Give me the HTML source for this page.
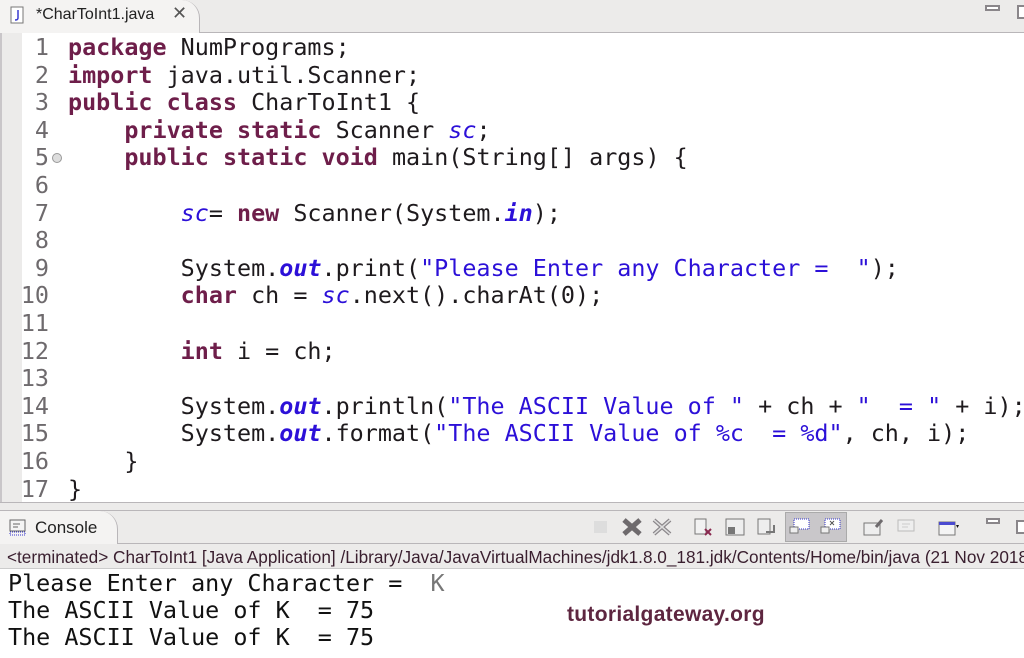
<!DOCTYPE html>
<html><head><meta charset="utf-8"><style>
*{margin:0;padding:0;box-sizing:border-box}
html,body{width:1024px;height:658px;overflow:hidden}
body{background:#fff;position:relative;font-family:"Liberation Sans",sans-serif}
.tabbar{position:absolute;left:0;top:0;width:1024px;height:33px;background:#ecebea;border-bottom:1px solid #b9b6b9}
.tab{position:absolute;left:0;top:0;width:200px;height:33px;background:#f4f3f2;border-right:1px solid #b9b6b9;border-top-right-radius:18px}
.tabtxt{position:absolute;left:36px;top:6px;font-size:16px;color:#222}
.leftstrip{position:absolute;left:0;top:33px;width:22px;height:470px;background:#ecebea;border-left:2px solid #c9c6c9}
.code{position:absolute;left:0;top:34px;font-family:"DejaVu Sans Mono","Liberation Mono",monospace;font-size:23.4px;line-height:27.6px;color:#1e1a1d;white-space:pre}
.ln{position:absolute;left:10px;width:39px;text-align:right;color:#6e6a6d}
.tx{position:absolute;left:68px}
.k{color:#6e1e4a;font-weight:bold}
.f{color:#2c10d8;font-weight:bold;font-style:italic}
.s{color:#2c10d8}
.band{position:absolute;left:0;top:502px;width:1024px;height:10px;background:#ecebea;border-top:1px solid #b9b6b9}
.ctab{position:absolute;left:0;top:510px;width:1024px;height:34px;background:#ecebea;border-top:1px solid #b9b6b9;border-bottom:1px solid #b9b6b9}
.ctab .t{position:absolute;left:0;top:0;width:118px;height:33px;background:#f4f3f2;border-top-right-radius:18px;border-right:1px solid #b9b6b9}
.status{position:absolute;left:0;top:544px;width:1024px;height:25px;background:#ecebea;border-bottom:1px solid #ccc;font-size:17.2px;color:#3a1f2f;padding:3px 0 0 7px;white-space:nowrap;overflow:hidden}
.out{position:absolute;left:8px;top:570px;font-family:"DejaVu Sans Mono","Liberation Mono",monospace;font-size:23.4px;line-height:27px;color:#111;white-space:pre}
.logo{position:absolute;left:567px;top:603px;font-size:21px;font-weight:bold;color:#5e2640;letter-spacing:.3px}
.ic{position:absolute;top:6px;width:22px;height:20px}
</style></head><body>
<div class="tabbar"><div class="tab">
<svg style="position:absolute;left:10px;top:6px" width="14" height="18"><rect x="1" y="1" width="12" height="16" fill="#fff" stroke="#777"/><path d="M8 4v8q0 2-3 2" stroke="#3a3ad0" fill="none" stroke-width="1.5"/></svg>
<div class="tabtxt">*CharToInt1.java</div>
<div style="position:absolute;left:172px;top:3px;font-size:18px;color:#555">✕</div>
</div>
<div style="position:absolute;left:985px;top:5px;width:15px;height:6px;border:2px solid #8a868a;background:#fff"></div>
<div style="position:absolute;left:1017px;top:5px;width:12px;height:14px;border:2px solid #8a868a;background:#fff"></div>
</div>
<div class="leftstrip"></div>
<div class="code">
<div class="ln" style="top:0">1</div><div class="tx" style="top:0"><span class="k">package</span> NumPrograms;</div>
<div class="ln" style="top:27.6px">2</div><div class="tx" style="top:27.6px"><span class="k">import</span> java.util.Scanner;</div>
<div class="ln" style="top:55.2px">3</div><div class="tx" style="top:55.2px"><span class="k">public</span> <span class="k">class</span> CharToInt1 {</div>
<div class="ln" style="top:82.8px">4</div><div class="tx" style="top:82.8px">    <span class="k">private</span> <span class="k">static</span> Scanner <span class="f" style="font-weight:normal">sc</span>;</div>
<div class="ln" style="top:110.4px">5</div><div style="position:absolute;left:52px;top:119px;width:10px;height:10px;border-radius:50%;border:1px solid #999;background:#ddd"></div><div class="tx" style="top:110.4px">    <span class="k">public</span> <span class="k">static</span> <span class="k">void</span> main(String[] args) {</div>
<div class="ln" style="top:138px">6</div>
<div class="ln" style="top:165.6px">7</div><div class="tx" style="top:165.6px">        <span class="f" style="font-weight:normal">sc</span>= <span class="k">new</span> Scanner(System.<span class="f">in</span>);</div>
<div class="ln" style="top:193.2px">8</div>
<div class="ln" style="top:220.8px">9</div><div class="tx" style="top:220.8px">        System.<span class="f">out</span>.print(<span class="s">"Please Enter any Character =  "</span>);</div>
<div class="ln" style="top:248.4px">10</div><div class="tx" style="top:248.4px">        <span class="k">char</span> ch = <span class="f" style="font-weight:normal">sc</span>.next().charAt(0);</div>
<div class="ln" style="top:276px">11</div>
<div class="ln" style="top:303.6px">12</div><div class="tx" style="top:303.6px">        <span class="k">int</span> i = ch;</div>
<div class="ln" style="top:331.2px">13</div>
<div class="ln" style="top:358.8px">14</div><div class="tx" style="top:358.8px">        System.<span class="f">out</span>.println(<span class="s">"The ASCII Value of "</span> + ch + <span class="s">"  = "</span> + i);</div>
<div class="ln" style="top:386.4px">15</div><div class="tx" style="top:386.4px">        System.<span class="f">out</span>.format(<span class="s">"The ASCII Value of %c  = %d"</span>, ch, i);</div>
<div class="ln" style="top:414px">16</div><div class="tx" style="top:414px">    }</div>
<div class="ln" style="top:441.6px">17</div><div class="tx" style="top:441.6px">}</div>
</div>
<div class="band"></div>
<div class="ctab"><div class="t">
<svg style="position:absolute;left:9px;top:8px" width="18" height="18"><rect x="1" y="1" width="15" height="11" fill="#f4f4f4" stroke="#666"/><path d="M4 5h7M4 8h5" stroke="#666"/><rect x="1" y="13" width="15" height="3" fill="none" stroke="#33c" stroke-dasharray="1 1"/></svg>
<div style="position:absolute;left:35px;top:7px;font-size:17px;color:#222">Console</div></div>
<div style="position:absolute;left:785px;top:1px;width:62px;height:30px;background:#c9c7ca;border:1px solid #aaa"></div>
<svg class="ic" style="left:590px" viewBox="0 0 22 20"><rect x="4" y="4" width="13" height="12" fill="#ddd"/></svg>
<svg class="ic" style="left:621px" viewBox="0 0 22 20"><path d="M3 3l16 14M19 3L3 17" stroke="#6e6a6d" stroke-width="5"/></svg>
<svg class="ic" style="left:651px" viewBox="0 0 22 20"><path d="M3 3l16 14M19 3L3 17" stroke="#8a868a" stroke-width="4"/><path d="M3 3l16 14M19 3L3 17" stroke="#ddd" stroke-width="1.5"/></svg>
<svg class="ic" style="left:693px" viewBox="0 0 22 20"><rect x="2" y="2" width="11" height="15" fill="#f2f2f2" stroke="#777"/><path d="M12 12l6 6M18 12l-6 6" stroke="#8a2a50" stroke-width="2"/></svg>
<svg class="ic" style="left:724px" viewBox="0 0 22 20"><rect x="2" y="2" width="18" height="16" fill="#eee" stroke="#777"/><rect x="4" y="10" width="7" height="7" fill="#777"/></svg>
<svg class="ic" style="left:756px" viewBox="0 0 22 20"><rect x="2" y="2" width="12" height="15" fill="#eee" stroke="#777"/><path d="M18 8v7h-8" stroke="#777" stroke-width="2" fill="none"/></svg>
<svg class="ic" style="left:789px" viewBox="0 0 22 20"><rect x="5" y="2" width="15" height="10" fill="#fff" stroke="#33c" stroke-dasharray="1 1"/><rect x="1" y="10" width="8" height="6" fill="#eee" stroke="#777"/></svg>
<svg class="ic" style="left:820px" viewBox="0 0 22 20"><rect x="5" y="2" width="15" height="10" fill="#fff" stroke="#33c" stroke-dasharray="1 1"/><path d="M10 4l4 4M14 4l-4 4" stroke="#555"/><rect x="1" y="10" width="8" height="6" fill="#eee" stroke="#777"/></svg>
<svg class="ic" style="left:862px" viewBox="0 0 22 20"><rect x="2" y="6" width="16" height="12" fill="#eee" stroke="#777"/><path d="M14 10l6-7" stroke="#6e6a6d" stroke-width="3"/></svg>
<svg class="ic" style="left:896px" viewBox="0 0 22 20"><rect x="2" y="3" width="16" height="11" fill="#eee" stroke="#bbb"/><path d="M6 7h8M6 10h6" stroke="#ccc"/></svg>
<svg class="ic" style="left:937px" viewBox="0 0 22 20"><rect x="2" y="5" width="16" height="13" fill="#f4f4f4" stroke="#777"/><rect x="2" y="5" width="16" height="3" fill="#4b4bd0"/><path d="M19 8l3 0-1.5 3z" fill="#111"/></svg>
<div style="position:absolute;left:986px;top:7px;width:14px;height:6px;border:2px solid #8a868a;background:#fff"></div>
<div style="position:absolute;left:1016px;top:9px;width:12px;height:14px;border:2px solid #8a868a;background:#fff"></div>
</div>
<div class="status">&lt;terminated&gt; CharToInt1 [Java Application] /Library/Java/JavaVirtualMachines/jdk1.8.0_181.jdk/Contents/Home/bin/java  (21 Nov 2018</div>
<div class="out">Please Enter any Character =  <span style="color:#777">K</span>
The ASCII Value of K  = 75
The ASCII Value of K  = 75</div>
<div class="logo">tutorialgateway.org</div>
</body></html>
